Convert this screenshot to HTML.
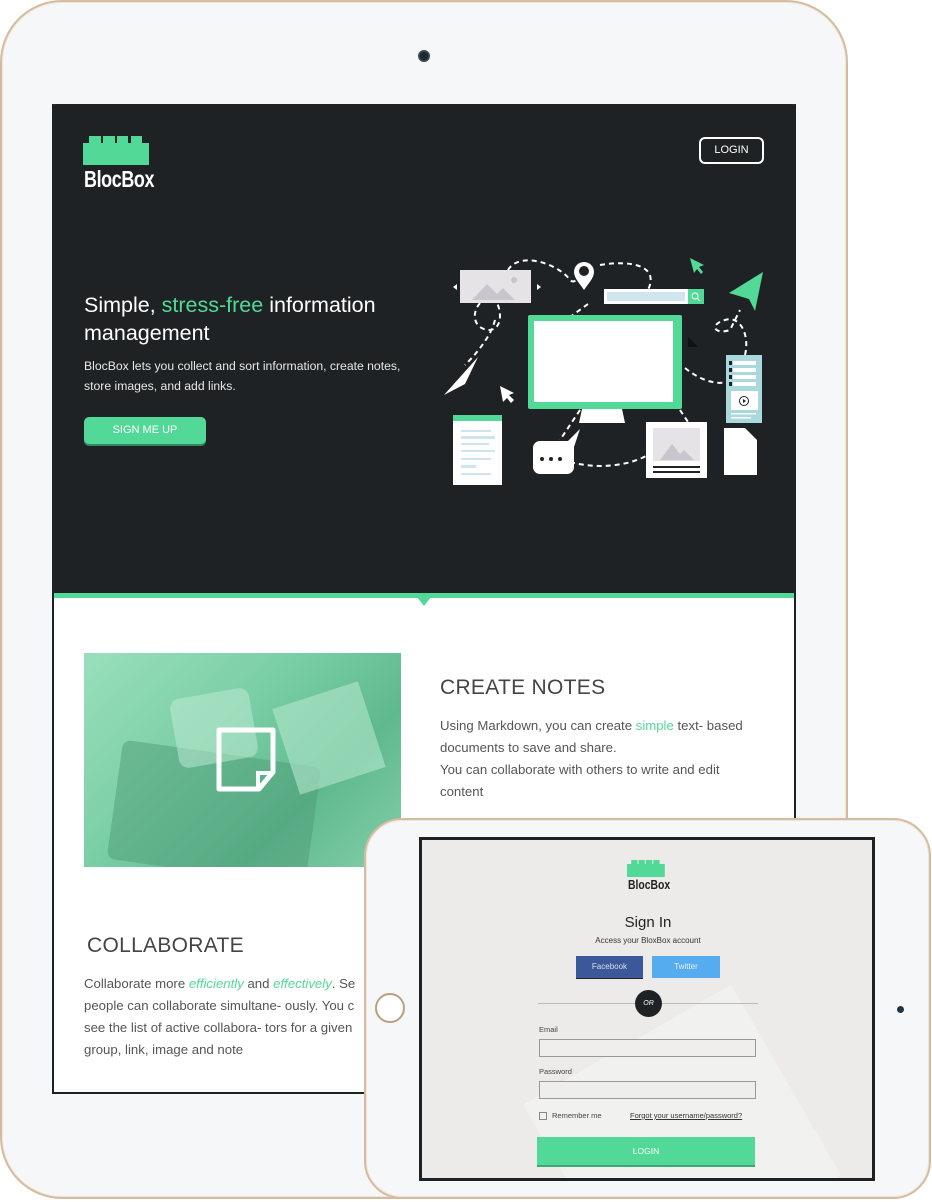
<!DOCTYPE html>
<html><head><meta charset="utf-8"><style>
*{margin:0;padding:0;box-sizing:border-box}
html,body{width:932px;height:1202px;overflow:hidden}
body{background:#fff;position:relative;font-family:"Liberation Sans",sans-serif}
.abs{position:absolute}
.tab{border-radius:62px;background:#f6f7f9;border:2px solid #d6bc9f;box-shadow:inset 0 0 0 1px #f0e6da}
.g{color:#52d998}
</style></head><body>
<!-- big tablet -->
<div class="abs tab" style="left:0;top:0;width:848px;height:1199px"></div>
<div class="abs" style="left:418px;top:50px;width:12px;height:12px;border-radius:50%;background:#1e2a33;border:2px solid #3a4650"></div>
<!-- screen -->
<div class="abs" style="left:52px;top:104px;width:744px;height:990px;background:#fff;border:2px solid #1f2224;border-top:0"></div>
<div class="abs" style="left:52px;top:104px;width:744px;height:489px;background:#1f2224;border-radius:3px 3px 0 0"></div>
<div class="abs" style="left:54px;top:593px;width:740px;height:5px;background:#52d998"></div>
<div class="abs" style="left:417px;top:597px;width:0;height:0;border-left:7px solid transparent;border-right:7px solid transparent;border-top:9px solid #52d998"></div>
<!-- logo -->
<svg class="abs" style="left:83px;top:134px" width="66" height="32"><path d="M0 9H6V2H18V9H20V2H32V9H34V2H45V9H48V2H59V9H66V31H0Z" fill="#52d998"/></svg>
<div class="abs" style="left:84px;top:166px;color:#fff;font:bold 23px 'Liberation Sans Narrow','Liberation Sans',sans-serif;letter-spacing:-0.5px;transform:scaleX(.78);transform-origin:left">BlocBox</div>
<div class="abs" style="left:699px;top:137px;width:65px;height:27px;border:2px solid #fff;border-radius:6px;color:#fff;font-size:11px;text-align:center;line-height:23px">LOGIN</div>
<!-- hero text -->
<div class="abs" style="left:84px;top:291px;color:#fff;font-size:21.5px;line-height:28px;width:340px">Simple, <span class="g">stress-free</span> information management</div>
<div class="abs" style="left:84px;top:356px;color:#e8e8e8;font-size:12.2px;line-height:20px;width:340px">BlocBox lets you collect and sort information, create notes, store images, and add links.</div>
<div class="abs" style="left:84px;top:417px;width:122px;height:27px;background:#52d998;border-radius:5px;box-shadow:0 2px 0 #2f8a62;color:#fff;font-size:11px;text-align:center;line-height:27px">SIGN ME UP</div>
<!-- illustration -->
<svg class="abs" style="left:0;top:0" width="932" height="600">
<g fill="none" stroke="#fff" stroke-width="2" stroke-dasharray="5 4">
<path d="M508 270C520 250 560 265 570 280C575 285 580 276 584 270"/>
<path d="M600 265C630 260 660 265 648 290"/>
<path d="M480 303C470 315 475 330 490 330C505 328 500 305 495 300M495 320C490 340 470 360 465 365"/>
<path d="M588 304L570 317"/>
<path d="M685 368C700 380 715 385 728 382"/>
<path d="M745 355C750 335 740 315 725 320C708 325 715 335 730 330L740 310"/>
<path d="M580 410L560 440"/>
<path d="M570 462C600 470 630 465 648 455"/>
<path d="M680 410L688 422"/>
</g>
<path d="M453 287l4-3v6zM541 287l-4-3v6z" fill="#fff"/>
<rect x="460" y="270" width="71" height="33" fill="#e6e3e6"/>
<path d="M472 300l15-16 10 10 6-6 12 12z" fill="#c8c6cc"/><circle cx="514" cy="280" r="3" fill="#c8c6cc"/>
<path d="M584 290c-4-6-10-12-10-18a10 10 0 0 1 20 0c0 6-6 12-10 18z" fill="#fff"/><circle cx="584" cy="271" r="5" fill="#1f2224"/>
<rect x="604" y="289" width="100" height="15" fill="#fff"/><rect x="607" y="292" width="78" height="9" fill="#cfe6ef"/>
<rect x="688" y="289" width="16" height="15" fill="#52d998"/><circle cx="695" cy="296" r="3" stroke="#fff" fill="none"/><path d="M697 298l3 3" stroke="#fff"/>
<path d="M690 258l14 7-5 2 4 5-2 2-4-5-3 4z" fill="#52d998"/>
<path d="M763 272l-34 21 20 6 6 12z" fill="#52d998"/>
<rect x="528" y="315" width="154" height="94" rx="2" fill="#52d998"/><rect x="534" y="321" width="139" height="81" fill="#fff"/>
<path d="M582 409h40l3 14h-46z" fill="#fff"/>
<path d="M688 337l10 10h-10z" fill="#111"/>
<path d="M444 395l34-38 -13 27z" fill="#fff"/>
<path d="M500 386l14 7-5 2 5 5-3 3-4-5-4 4z" fill="#fff"/>
<rect x="453" y="415" width="49" height="70" fill="#fff"/><rect x="453" y="415" width="49" height="6" fill="#52d998"/>
<g fill="#cfe4ef"><rect x="461" y="430" width="30" height="2"/><rect x="461" y="436" width="34" height="3"/><rect x="461" y="443" width="28" height="2"/><rect x="461" y="450" width="34" height="2"/><rect x="461" y="458" width="30" height="2"/><rect x="461" y="465" width="15" height="3"/><rect x="461" y="473" width="30" height="2"/></g>
<path d="M540 441h28l12-12-6 18v20a7 7 0 0 1-7 7h-27a7 7 0 0 1-7-7v-19a7 7 0 0 1 7-7z" fill="#fff"/>
<g fill="#1f2224"><circle cx="542" cy="459" r="2"/><circle cx="551" cy="459" r="2"/><circle cx="560" cy="459" r="2"/></g>
<rect x="646" y="422" width="61" height="56" fill="#fff"/><rect x="653" y="428" width="47" height="33" fill="#e6e3e6"/>
<path d="M660 460l12-16 8 10 4-4 10 10z" fill="#c8c6cc"/><rect x="653" y="466" width="47" height="2" fill="#222"/><rect x="653" y="471" width="47" height="2" fill="#222"/>
<rect x="726" y="355" width="36" height="68" fill="#a9d9dd"/>
<g fill="#fff"><rect x="733" y="361" width="23" height="4"/><rect x="733" y="368" width="23" height="4"/><rect x="733" y="375" width="23" height="4"/><rect x="733" y="382" width="23" height="4"/><rect x="731" y="391" width="27" height="19"/><rect x="731" y="413" width="25" height="1.5"/><rect x="731" y="417" width="20" height="1.5"/></g>
<g fill="#1f2224"><rect x="729" y="361" width="3" height="4"/><rect x="729" y="368" width="3" height="4"/><rect x="729" y="375" width="3" height="4"/><rect x="729" y="382" width="3" height="4"/></g>
<circle cx="744" cy="401" r="4.5" fill="none" stroke="#1f2224"/><path d="M743 399v4l3-2z" fill="#1f2224"/>
<path d="M724 428h21l12 12v35h-33z" fill="#fff"/>
</svg>
<!-- features -->
<div class="abs" style="left:84px;top:653px;width:317px;height:214px;background:linear-gradient(135deg,#9adfbd,#7acfa6 40%,#5fb98e 70%,#84cfaa);overflow:hidden">
 <div class="abs" style="left:30px;top:100px;width:200px;height:120px;background:#4e9b78;transform:rotate(8deg);border-radius:8px;opacity:.5"></div>
 <div class="abs" style="left:90px;top:40px;width:80px;height:70px;background:#c3ecd6;transform:rotate(-10deg);opacity:.5;border-radius:10px"></div>
 <div class="abs" style="left:200px;top:40px;width:90px;height:90px;background:#b2e6cc;transform:rotate(-18deg);opacity:.6"></div>
 <svg class="abs" style="left:130px;top:74px" width="64" height="66"><path d="M5 3H59V45L45 62H5Z" fill="none" stroke="#fff" stroke-width="5" stroke-linejoin="round"/><path d="M44 62V46H59" fill="none" stroke="#fff" stroke-width="4"/></svg>
</div>
<div class="abs" style="left:440px;top:676px;color:#444;font-size:21px;letter-spacing:.3px">CREATE NOTES</div>
<div class="abs" style="left:440px;top:715px;color:#555;font-size:13.2px;line-height:22px;width:330px">Using Markdown, you can create <span class="g">simple</span> text- based documents to save and share.<br>You can collaborate with others to write and edit<br>content</div>
<div class="abs" style="left:87px;top:934px;color:#444;font-size:21px;letter-spacing:.3px">COLLABORATE</div>
<div class="abs" style="left:84px;top:973px;color:#555;font-size:13.2px;line-height:22px;width:280px;white-space:nowrap;overflow:hidden">Collaborate more <i class="g">efficiently</i> and <i class="g">effectively</i>. Se<br>people can collaborate simultane- ously. You c<br>see the list of active collabora- tors for a given<br>group, link, image and note</div>
<!-- small tablet -->
<div class="abs tab" style="left:364px;top:818px;width:567px;height:381px;border-radius:38px"></div>
<div class="abs" style="left:375px;top:993px;width:30px;height:30px;border-radius:50%;border:2px solid #b9a080;background:#fff"></div>
<div class="abs" style="left:897px;top:1006px;width:7px;height:7px;border-radius:50%;background:#1e3345"></div>
<div class="abs" style="left:419px;top:837px;width:456px;height:344px;background:#ecebe9;border:3px solid #1f2224;overflow:hidden">
 <div class="abs" style="left:140px;top:190px;width:240px;height:220px;background:#f3f2f0;transform:rotate(-30deg);opacity:.8"></div>
</div>
<svg class="abs" style="left:627px;top:859px" width="40" height="19"><path d="M0 5H4V1H10V5H11V1H17V5H18V1H24V5H25V1H31V5H36V18H0Z" fill="#52d998" transform="scale(1.05 1)"/></svg>
<div class="abs" style="left:628px;top:877px;font:bold 13px 'Liberation Sans Narrow','Liberation Sans',sans-serif;color:#222;transform:scaleX(.8);transform-origin:left">BlocBox</div>
<div class="abs" style="left:600px;top:914px;width:96px;text-align:center;font-size:15px;color:#222">Sign In</div>
<div class="abs" style="left:560px;top:936px;width:176px;text-align:center;font-size:8px;color:#333">Access your BloxBox account</div>
<div class="abs" style="left:576px;top:956px;width:67px;height:22px;background:#3b5998;color:#dde;font-size:8px;text-align:center;line-height:22px;box-shadow:0 1px 0 #223">Facebook</div>
<div class="abs" style="left:652px;top:956px;width:68px;height:22px;background:#55acee;color:#eef;font-size:8px;text-align:center;line-height:22px">Twitter</div>
<div class="abs" style="left:538px;top:1003px;width:220px;height:1px;background:#bbb"></div>
<div class="abs" style="left:635px;top:990px;width:27px;height:27px;border-radius:50%;background:#1f2224;color:#fff;font-size:7px;font-style:italic;text-align:center;line-height:27px">OR</div>
<div class="abs" style="left:539px;top:1025px;font-size:7.5px;color:#444">Email</div>
<div class="abs" style="left:539px;top:1039px;width:217px;height:18px;border:1px solid #999;background:#efeeec"></div>
<div class="abs" style="left:539px;top:1067px;font-size:7.5px;color:#444">Password</div>
<div class="abs" style="left:539px;top:1081px;width:217px;height:18px;border:1px solid #999;background:#efeeec"></div>
<div class="abs" style="left:539px;top:1112px;width:8px;height:8px;border:1px solid #888"></div>
<div class="abs" style="left:552px;top:1111px;font-size:7.5px;color:#444">Remember me</div>
<div class="abs" style="left:630px;top:1111px;font-size:7.5px;color:#333;text-decoration:underline">Forgot your username/password?</div>
<div class="abs" style="left:537px;top:1137px;width:218px;height:28px;background:#52d998;box-shadow:0 2px 0 #3aa877;color:#fff;font-size:8.5px;text-align:center;line-height:28px">LOGIN</div>
</body></html>
